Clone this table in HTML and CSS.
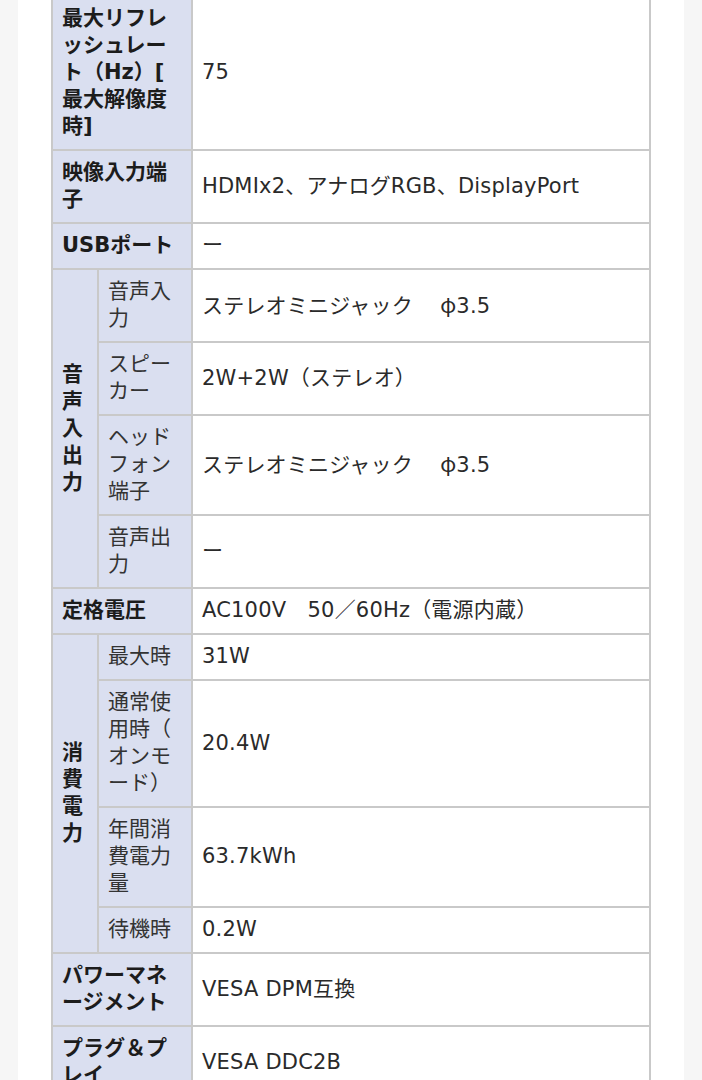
FILE: index.html
```html
<!DOCTYPE html>
<html lang="ja">
<head>
<meta charset="utf-8">
<title>仕様</title>
<link rel="stylesheet" href="styles.css">
</head>
<body>
<main class="page">
  <table class="spec">
    <colgroup>
      <col class="c-group">
      <col class="c-sub">
      <col class="c-val">
    </colgroup>
    <tbody>
      <tr><th colspan="2">最大リフレ<br>ッシュレー<br>ト（Hz）[<br>最大解像度<br>時]</th><td>75</td></tr>
      <tr><th colspan="2">映像入力端<br>子</th><td>HDMIx2、アナログRGB、DisplayPort</td></tr>
      <tr><th colspan="2">USBポート</th><td>ー</td></tr>
      <tr><th rowspan="4" class="group">音声入出力</th><th class="sub">音声入<br>力</th><td>ステレオミニジャック　<span class="sym">φ</span>3.5</td></tr>
      <tr><th class="sub">スピー<br>カー</th><td>2W+2W（ステレオ）</td></tr>
      <tr><th class="sub">ヘッド<br>フォン<br>端子</th><td>ステレオミニジャック　<span class="sym">φ</span>3.5</td></tr>
      <tr><th class="sub">音声出<br>力</th><td>ー</td></tr>
      <tr><th colspan="2">定格電圧</th><td>AC100V　50／60Hz（電源内蔵）</td></tr>
      <tr><th rowspan="4" class="group">消費電力</th><th class="sub">最大時</th><td>31W</td></tr>
      <tr><th class="sub">通常使<br>用時（<br>オンモ<br>ード）</th><td>20.4W</td></tr>
      <tr><th class="sub">年間消<br>費電力<br>量</th><td>63.7kWh</td></tr>
      <tr><th class="sub">待機時</th><td>0.2W</td></tr>
      <tr><th colspan="2">パワーマネ<br>ージメント</th><td>VESA DPM互換</td></tr>
      <tr><th colspan="2">プラグ＆プ<br>レイ</th><td>VESA DDC2B</td></tr>
    </tbody>
  </table>
</main>
</body>
</html>
```
FILE: styles.css
```css
html, body {
  margin: 0;
  padding: 0;
}

body {
  background: #f6f6f6;
  font-family: "DejaVu Sans", "Noto Sans CJK JP", sans-serif;
  font-size: 21px;
  line-height: 27px;
  color: #222;
}

.page {
  margin: 0 18px 0 18px;
  padding: 0 0 0 33px;
  background: #fff;
  min-height: 1100px;
}

.spec {
  border-collapse: collapse;
  table-layout: fixed;
  width: 598px;
  margin-top: -5px;
}

.c-group { width: 46px; }
.c-sub { width: 94px; }
.c-val { width: 458px; }

.spec th,
.spec td {
  border: 2px solid #c9c9c9;
  padding: 8px 9px 9px 9px;
  vertical-align: middle;
  text-align: left;
}

.spec th {
  background: #dadff0;
  font-weight: bold;
  color: #1c1c1c;
}

.spec th.sub {
  font-weight: normal;
  color: #333;
}

.spec td {
  color: #2a2a2a;
  letter-spacing: 0.2px;
}

.sym {
  font-family: "Noto Sans CJK JP", sans-serif;
  padding-left: 6px;
}
```
